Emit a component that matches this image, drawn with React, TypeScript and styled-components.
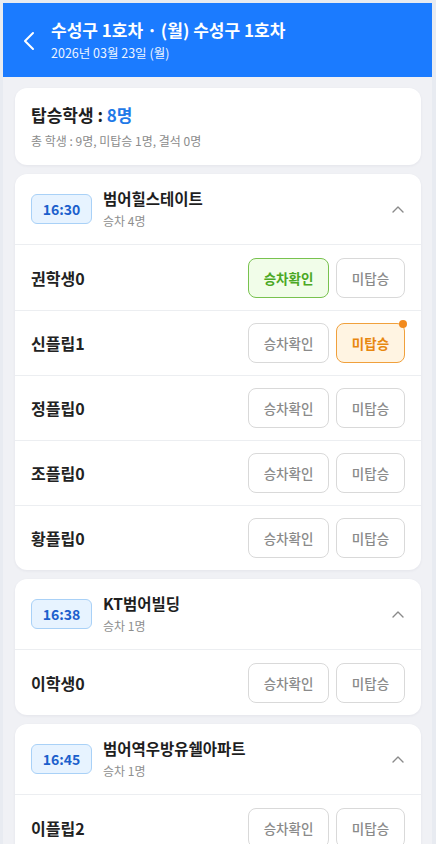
import styled, { createGlobalStyle } from "styled-components";

const GlobalStyle = createGlobalStyle`
  html, body {
    margin: 0;
    padding: 0;
    background: #e8ebf1;
  }
  body {
    font-family: "Noto Sans CJK KR", "Noto Sans", sans-serif;
  }
  * { box-sizing: border-box; }
`;

interface Student {
  name: string;
  status: "none" | "boarded" | "missed";
}

interface Stop {
  time: string;
  place: string;
  students: Student[];
}

const stops: Stop[] = [
  {
    time: "16:30",
    place: "범어힐스테이트",
    students: [
      { name: "권학생0", status: "boarded" },
      { name: "신플립1", status: "missed" },
      { name: "정플립0", status: "none" },
      { name: "조플립0", status: "none" },
      { name: "황플립0", status: "none" },
    ],
  },
  {
    time: "16:38",
    place: "KT범어빌딩",
    students: [{ name: "이학생0", status: "none" }],
  },
  {
    time: "16:45",
    place: "범어역우방유쉘아파트",
    students: [{ name: "이플립2", status: "none" }],
  },
];

const Frame = styled.div`
  margin: 3px 4px 0 3px;
  background: #f0f1f5;
  height: 841px;
  overflow: hidden;
`;

const Header = styled.header`
  height: 74px;
  background: #1b7bff;
  display: flex;
  align-items: center;
  padding: 0 0 0 17px;
  gap: 13px;
  color: #fff;
`;

const BackBtn = styled.button`
  border: none;
  background: none;
  padding: 0;
  width: 18px;
  height: 24px;
  display: flex;
  align-items: center;
  justify-content: center;
  margin-top: 2px;
`;

const TitleBox = styled.div`
  display: flex;
  flex-direction: column;
  gap: 3px;
  margin-top: -1px;
`;

const Title = styled.h1`
  margin: 0;
  font-size: 17px;
  font-weight: 700;
  line-height: 22px;
`;

const Sub = styled.div`
  font-size: 12.5px;
  line-height: 17px;
  opacity: 0.92;
`;

const Content = styled.main`
  padding: 11px 11px 0 12px;
  display: flex;
  flex-direction: column;
  gap: 9px;
`;

const Card = styled.section`
  background: #fff;
  border-radius: 12px;
  box-shadow: 0 1px 3px rgba(30, 40, 60, 0.06);
  overflow: hidden;
`;

const Summary = styled(Card)`
  padding: 15px 16px 16px 16px;
`;

const SummaryTitle = styled.div`
  font-size: 17px;
  font-weight: 700;
  color: #1e1e1e;
  line-height: 24px;
`;

const Count = styled.span`
  color: #1f7ae8;
`;

const SummarySub = styled.div`
  margin-top: 5px;
  font-size: 12px;
  color: #8b8b8b;
  line-height: 17px;
`;

const StopHead = styled.div`
  height: 71px;
  display: flex;
  align-items: center;
  padding: 0 16px;
  gap: 11px;
  border-bottom: 1px solid #eceef1;
`;

const TimeBadge = styled.div`
  width: 61px;
  height: 30px;
  border: 1px solid #a9d1f7;
  background: #e7f3ff;
  border-radius: 6px;
  color: #1c5fcc;
  font-weight: 700;
  font-size: 14px;
  display: flex;
  align-items: center;
  justify-content: center;
  margin-top: -1px;
`;

const PlaceBox = styled.div`
  flex: 1;
  display: flex;
  flex-direction: column;
  gap: 4px;
  margin-top: -3px;
`;

const Place = styled.div`
  font-size: 15.5px;
  font-weight: 700;
  color: #1e1e1e;
  line-height: 22px;
`;

const Boarded = styled.div`
  font-size: 12px;
  color: #8e8e8e;
  line-height: 16px;
`;

const Row = styled.div`
  height: 65px;
  display: flex;
  align-items: center;
  padding: 0 16px;
  gap: 7px;
  & + & {
    border-top: 1px solid #eceef1;
  }
`;

const Name = styled.div`
  flex: 1;
  font-size: 16px;
  font-weight: 700;
  color: #222;
`;

type Tone = "plain" | "green" | "orange";

const ActBtn = styled.button<{ $tone: Tone; $w: number }>`
  position: relative;
  width: ${(p) => p.$w}px;
  height: 40px;
  border-radius: 8px;
  font-family: inherit;
  font-size: 13.5px;
  font-weight: ${(p) => (p.$tone === "plain" ? 500 : 700)};
  border: 1px solid
    ${(p) =>
      p.$tone === "green" ? "#78c24f" : p.$tone === "orange" ? "#f0a03c" : "#d9d9d9"};
  background: ${(p) =>
    p.$tone === "green" ? "#f1fde9" : p.$tone === "orange" ? "#fff4e2" : "#fff"};
  color: ${(p) =>
    p.$tone === "green" ? "#4ba825" : p.$tone === "orange" ? "#e8870f" : "#8a8a8a"};
  padding: 0;
`;

const Dot = styled.span`
  position: absolute;
  top: -4px;
  right: -3px;
  width: 8px;
  height: 8px;
  border-radius: 50%;
  background: #f28a1c;
`;

function App() {
  return (
    <>
      <GlobalStyle />
      <Frame>
        <Header>
          <BackBtn aria-label="뒤로">
            <svg width="14" height="22" viewBox="0 0 14 22" fill="none">
              <path d="M11 3 L3 11 L11 19" stroke="#fff" strokeWidth="2" strokeLinecap="round" strokeLinejoin="round" />
            </svg>
          </BackBtn>
          <TitleBox>
            <Title>수성구 1호차 · (월) 수성구 1호차</Title>
            <Sub>2026년 03월 23일 (월)</Sub>
          </TitleBox>
        </Header>
        <Content>
          <Summary>
            <SummaryTitle>
              탑승학생 : <Count>8명</Count>
            </SummaryTitle>
            <SummarySub>총 학생 : 9명, 미탑승 1명, 결석 0명</SummarySub>
          </Summary>
          {stops.map((stop) => (
            <Card key={stop.time}>
              <StopHead>
                <TimeBadge>{stop.time}</TimeBadge>
                <PlaceBox>
                  <Place>{stop.place}</Place>
                  <Boarded>
                    승차 {stop.students.filter((s) => s.status !== "missed").length}명
                  </Boarded>
                </PlaceBox>
                <svg width="14" height="10" viewBox="0 0 14 10" fill="none">
                  <path d="M2 8 L7 3 L12 8" stroke="#8a8a8a" strokeWidth="1.4" strokeLinecap="round" strokeLinejoin="round" />
                </svg>
              </StopHead>
              {stop.students.map((s) => (
                <Row key={s.name}>
                  <Name>{s.name}</Name>
                  <ActBtn $w={81} $tone={s.status === "boarded" ? "green" : "plain"}>
                    승차확인
                  </ActBtn>
                  <ActBtn $w={69} $tone={s.status === "missed" ? "orange" : "plain"}>
                    미탑승
                    {s.status === "missed" && <Dot />}
                  </ActBtn>
                </Row>
              ))}
            </Card>
          ))}
        </Content>
      </Frame>
    </>
  );
}

export default App;
